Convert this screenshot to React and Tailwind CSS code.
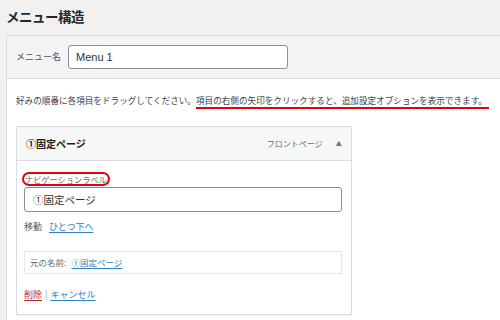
const jp = "font-['Noto_Sans_CJK_JP','Noto_Sans',sans-serif]";

export default function App() {
  return (
    <div className={`w-[500px] h-[320px] overflow-hidden bg-[#f1f1f1] text-[#3c434a] ${jp}`}>
      <h2 className="pl-[6px] pt-[6px] h-[35px] text-[13.5px] font-bold text-[#23282d] tracking-[-0.5px]">
        メニュー構造
      </h2>

      <div className="ml-[6px] border-l border-t border-[#dcdcde] h-[285px] bg-white">
        {/* メニュー名 */}
        <div className="h-[43px] bg-[#f4f4f4] border-b border-[#dcdcde] flex items-center pl-[9px]">
          <span className="text-[9px] text-[#50575e] w-[52px]">メニュー名</span>
          <input
            readOnly
            value="Menu 1"
            className="w-[220px] h-[24px] bg-white border border-[#8c8f94] rounded-[3px] px-[7px] text-[11px] text-[#2c3338] font-['Liberation_Sans',sans-serif] outline-none"
          />
        </div>

        {/* 説明 */}
        <div className="pl-[9px] pr-2 pt-[15px]">
          <p className="text-[8.6px] leading-[12px] text-[#3c434a] whitespace-nowrap">
            好みの順番に各項目をドラッグしてください。
            <span className="relative">
              項目の右側の矢印をクリックすると、追加設定オプションを表示できます。
              <span className="absolute left-0 right-[-2px] bottom-[-3px] h-[2px] bg-[#e3000f]" />
            </span>
          </p>

          {/* 項目 */}
          <div className="mt-[20px] w-[336px] h-[189px] border border-[#dcdcde] shadow-[0_1px_1px_rgba(0,0,0,0.04)]">
            <div className="h-[34px] bg-[#f6f7f7] border-b border-[#dcdcde] flex items-center justify-between pl-[9px] pr-[9px]">
              <span className="text-[10px] font-bold text-[#1d2327]">①固定ページ</span>
              <div className="flex items-center gap-[13px]">
                <span className="text-[8px] text-[#646970]">フロントページ</span>
                <span className="text-[6.5px] text-[#787c82]">▲</span>
              </div>
            </div>

            <div className="px-[7px] bg-white">
              <div className="pt-[11px] h-[26px] flex items-start">
                <span className="ml-[-2px] px-[1px] h-[14px] flex items-center leading-none border-2 border-[#e3000f] rounded-[7px] text-[8.2px] text-[#646970]">
                  ナビゲーションラベル
                </span>
              </div>
              <div className="w-[318px] h-[25px] border border-[#8c8f94] rounded-[3px] flex items-center pl-[8px] text-[10.5px] text-[#2c3338]">
                ①固定ページ
              </div>
              <div className="mt-[8px] h-[14px] flex items-center text-[9px]">
                <span className="text-[#50575e] mr-[7px]">移動</span>
                <span className="text-[#2f80c8] underline underline-offset-2">ひとつ下へ</span>
              </div>
              <div className="mt-[17px] w-[318px] h-[23px] border border-[#e5e5e5] flex items-center pl-[5px] text-[8.5px]">
                <span className="text-[#646970] mr-[5px]">元の名前:</span>
                <span className="text-[#2f80c8] underline underline-offset-2">①固定ページ</span>
              </div>
              <div className="mt-[14px] flex items-center text-[9px]">
                <span className="text-[#b32d2e] underline underline-offset-2">削除</span>
                <span className="text-[#8c8f94] mx-[3px]">|</span>
                <span className="text-[#2f80c8] underline underline-offset-2">キャンセル</span>
              </div>
            </div>
          </div>
        </div>
      </div>
    </div>
  );
}
